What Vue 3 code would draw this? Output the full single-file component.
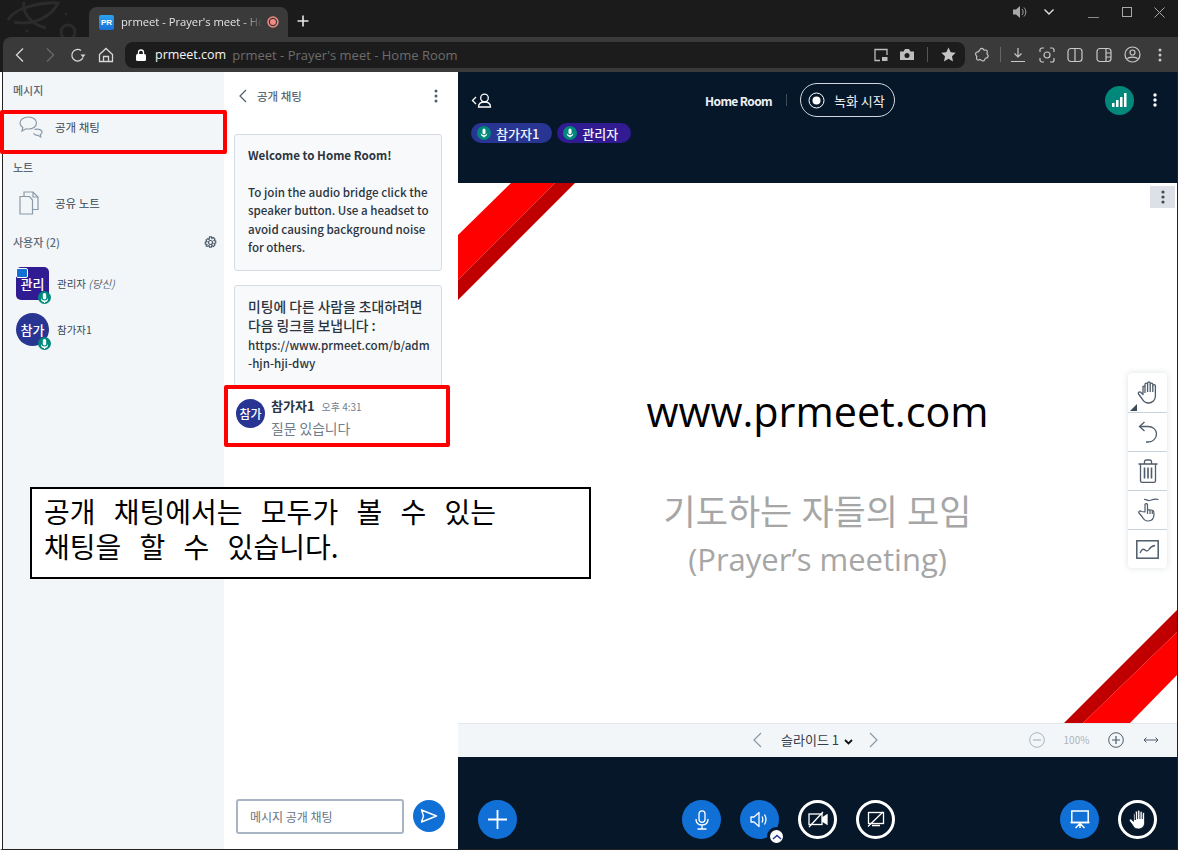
<template>
  <div class="window">
    <!-- browser tab strip -->
    <div class="tabstrip">
      <svg class="swirl" width="84" height="37" viewBox="0 0 84 37" fill="none" stroke="#2b2b2b" stroke-width="3">
        <path d="M8 20C14 8 40 2 58 3C52 16 34 26 14 22" />
        <path d="M24 2C22 12 30 24 46 28" />
        <circle cx="68" cy="32" r="7" />
        <circle cx="66" cy="14" r="1.5" fill="#2b2b2b" stroke="none" />
        <circle cx="27" cy="31" r="1.5" fill="#2b2b2b" stroke="none" />
      </svg>
      <div class="tab">
        <span class="favicon">PR</span>
        <span class="tab-title">prmeet - Prayer's meet - Home Room</span>
        <svg class="tab-rec" width="14" height="14" viewBox="0 0 14 14">
          <circle cx="7" cy="7" r="5" fill="none" stroke="#f28b82" stroke-width="1.5" />
          <circle cx="7" cy="7" r="3" fill="#f28b82" />
        </svg>
      </div>
      <svg class="new-tab" width="14" height="14" viewBox="0 0 14 14" stroke="#e8e8e8" stroke-width="1.6">
        <path d="M7 1.5v11M1.5 7h11" />
      </svg>
      <div class="win-controls">
        <svg width="16" height="14" viewBox="0 0 16 14">
          <path d="M1 4.500h3L8 1v12L4 9.500H1z" fill="#a8a8a8" />
          <path d="M10 4c1.400 1.600 1.400 4.400 0 6M12 2.500c2.400 2.600 2.400 6.400 0 9" fill="none" stroke="#a8a8a8" />
        </svg>
        <svg class="wc-chevron" width="12" height="8" viewBox="0 0 12 8" fill="none" stroke="#e0e0e0" stroke-width="1.400">
          <path d="M1.500 1.500 6 6l4.500-4.500" />
        </svg>
        <svg class="wc-min" width="11" height="11" viewBox="0 0 11 11" stroke="#8a8a8a"><path d="M0 10.500h11" /></svg>
        <svg class="wc-max" width="10" height="10" viewBox="0 0 10 10" fill="none" stroke="#a8a8a8"><rect x=".5" y=".5" width="9" height="9" /></svg>
        <svg class="wc-close" width="11" height="11" viewBox="0 0 11 11" stroke="#a8a8a8"><path d="m.5.5 10 10M10.500.5l-10 10" /></svg>
      </div>
    </div>

    <!-- browser toolbar -->
    <div class="toolbar">
      <div class="nav-icons">
        <svg width="16" height="16" viewBox="0 0 16 16" fill="none" stroke="#d8d8d8" stroke-width="1.300"><path d="M11 1.500 4.500 8l6.500 6.500" /></svg>
        <svg width="16" height="16" viewBox="0 0 16 16" fill="none" stroke="#6a6a6a" stroke-width="1.300"><path d="M5 1.500 11.500 8 5 14.500" /></svg>
        <svg width="16" height="16" viewBox="0 0 16 16" fill="none" stroke="#d8d8d8" stroke-width="1.300"><path d="M13 10.500A5.800 5.800 0 1 1 11 3.500" /><path d="M10.500 7.500h5l-2.500 3z" fill="#d8d8d8" stroke="none" /></svg>
        <svg width="16" height="16" viewBox="0 0 16 16" fill="none" stroke="#d8d8d8" stroke-width="1.300"><path d="M1.500 7.500 8 1.500l6.500 6V14.500h-13zM5.500 14.500V9.500h5v5" /></svg>
      </div>
      <div class="address">
        <svg width="10" height="12" viewBox="0 0 10 12"><rect y="5" width="10" height="7" rx="1.500" fill="#fff" /><path d="M2.500 5.500V3.500a2.500 2.500 0 0 1 5 0v2" fill="none" stroke="#fff" stroke-width="1.300" /></svg>
        <span class="host">prmeet.com</span>
        <span class="page-title">prmeet - Prayer's meet - Home Room</span>
        <div class="address-icons">
          <svg width="14" height="14" viewBox="0 0 14 14" fill="none" stroke="#bdbdbd" stroke-width="1.300"><path d="M6 12.500H1V1.500h12V7" /><rect x="8" y="9" width="5.500" height="4" fill="#bdbdbd" stroke="none" /></svg>
          <svg width="14" height="13" viewBox="0 0 14 13"><path d="M0 3.500h3.500L5 1h4l1.500 2.500H14V12H0z" fill="#bdbdbd" /><circle cx="7" cy="7.500" r="2.500" fill="#1c1c1c" /></svg>
          <span class="addr-sep"></span>
          <svg width="15" height="15" viewBox="0 0 15 15"><path d="m7.500.5 2.200 4.700 5 .6-3.700 3.500 1 5.100-4.500-2.600L3 14.400l1-5.100L.3 5.800l5-.6z" fill="#c4c4c4" /></svg>
        </div>
      </div>
      <div class="ext-icons">
        <svg width="16" height="16" viewBox="0 0 16 16" fill="none" stroke="#c8c8c8" stroke-width="1.200"><path d="M6 2.500c1-1.500 3-1.500 3.500 0 .3 1 1.500.5 2.500.5 1.500 0 1.500 2 1 3-.5.800.5 1.200 1 2 .6 1.500-.5 3-2 3-1 0-1 1-1.500 2-.8 1.500-2.800 1-3.500 0-.5-.8-1.500-.3-2.500 0-1.500.3-2.500-1.500-1.800-2.800.5-1-.2-1.200-.7-2C1 6.500 2 5 3.500 5 5 5 5 3.800 6 2.500z" /></svg>
        <span class="addr-sep ext-sep"></span>
        <svg width="16" height="16" viewBox="0 0 16 16" fill="none" stroke="#c8c8c8" stroke-width="1.200"><path d="M8 1v9M4.500 6.500 8 10l3.500-3.500M1 14.500h14" /></svg>
        <svg width="16" height="16" viewBox="0 0 16 16" fill="none" stroke="#c8c8c8" stroke-width="1.200"><path d="M1 5V3a2 2 0 0 1 2-2h2M11 1h2a2 2 0 0 1 2 2v2M15 11v2a2 2 0 0 1-2 2h-2M5 15H3a2 2 0 0 1-2-2v-2" /><circle cx="8" cy="8" r="3" /></svg>
        <svg width="16" height="16" viewBox="0 0 16 16" fill="none" stroke="#c8c8c8" stroke-width="1.200"><rect x="1" y="1.500" width="14" height="13" rx="3" /><path d="M8 1.500v13" /></svg>
        <svg width="16" height="16" viewBox="0 0 16 16" fill="none" stroke="#c8c8c8" stroke-width="1.200"><rect x="1" y="1.500" width="14" height="13" rx="3" /><path d="M10 1.500v13M10 6h5M10 10h5" /></svg>
        <svg width="17" height="17" viewBox="0 0 17 17" fill="none" stroke="#c8c8c8" stroke-width="1.200"><circle cx="8.500" cy="8.500" r="7.500" /><circle cx="8.500" cy="6.500" r="2.500" /><path d="M3.500 13c1-2.500 9-2.500 10 0" /></svg>
        <svg class="ext-dots" width="4" height="14" viewBox="0 0 4 14" fill="#c8c8c8"><circle cx="2" cy="2" r="1.500" /><circle cx="2" cy="7" r="1.500" /><circle cx="2" cy="12" r="1.500" /></svg>
      </div>
    </div>

    <div class="app">
      <!-- sidebar -->
      <aside class="sidebar">
        <h4 class="side-title">메시지</h4>
        <div class="side-row chat-row">
          <svg width="24" height="22" viewBox="0 0 24 22" fill="none" stroke="#8a99a8" stroke-width="1.200">
            <path d="M9.500 1C4.800 1 1 3.700 1 7c0 1.800 1.100 3.400 2.800 4.500L3 15l4-2.200c.8.200 1.600.2 2.500.2 4.700 0 8-2.700 8-6s-3.300-6-8-6z" />
            <path d="M15.500 13.500c1.500-.2 3-.5 4.500-.2 2 .5 3.200 1.500 3 3-.1 1-.8 1.800-1.700 2.300l.5 2.400-3-1.700c-1.800.2-3.500-.5-4.300-2" />
          </svg>
          <span>공개 채팅</span>
        </div>
        <h4 class="side-title note-title">노트</h4>
        <div class="side-row note-row">
          <svg width="20" height="24" viewBox="0 0 20 24" fill="none" stroke="#8a99a8" stroke-width="1.200">
            <path d="M1 5.500h9.500l3 3.500v14H1z" />
            <path d="M5 5.500V1h9l5 5v12.500h-5.500" />
            <path d="M14 1v5h5" />
          </svg>
          <span>공유 노트</span>
        </div>
        <div class="users-head">
          <h4 class="side-title">사용자 (2)</h4>
          <svg width="13" height="13" viewBox="0 0 13 13" fill="none" stroke="#4e5c6b" stroke-width="1.200">
            <circle cx="6.500" cy="6.500" r="2" />
            <path d="M5.500.8h2l.4 1.700 1.500-.9 1.500 1.500-.9 1.500 1.700.4v2l-1.700.4.9 1.500-1.500 1.500-1.500-.9-.4 1.700h-2l-.4-1.700-1.500.9L2.100 10l.9-1.500-1.700-.4v-2l1.700-.4-.9-1.500 1.500-1.500 1.500.9z" />
          </svg>
        </div>
        <div v-for="u in users" :key="u.short" class="user">
          <div class="avatar" :class="u.cls">
            {{ u.short }}
            <span v-if="u.presenter" class="presenter-badge"></span>
            <span class="mic-badge">
              <svg width="9" height="10" viewBox="0 0 9 10" fill="#fff"><rect x="2.800" y="0" width="3.400" height="6.500" rx="1.700" /><path d="M1 4.500c0 4 7 4 7 0v1c0 3.500-2.500 3.500-3 3.600V10H4V9.100c-.5-.1-3-.1-3-3.600z" /></svg>
            </span>
          </div>
          <span class="user-name">{{ u.name }}<em v-if="u.you"> (당신)</em></span>
        </div>
      </aside>

      <!-- public chat panel -->
      <section class="chat">
        <div class="chat-head">
          <svg width="8" height="14" viewBox="0 0 8 14" fill="none" stroke="#4e5c6b" stroke-width="1.200"><path d="M7 1 1 7l6 6" /></svg>
          <span class="chat-title">공개 채팅</span>
          <svg class="chat-dots" width="4" height="14" viewBox="0 0 4 14" fill="#4e5c6b"><circle cx="2" cy="2" r="1.500" /><circle cx="2" cy="7" r="1.500" /><circle cx="2" cy="12" r="1.500" /></svg>
        </div>
        <div class="chat-list">
          <div class="card">
            <p><span class="strong">Welcome to Home Room!</span></p>
            <p class="blank"></p>
            <p>To join the audio bridge click the speaker button. Use a headset to avoid causing background noise for others.</p>
          </div>
          <div class="card invite">
            <p><span class="ko">미팅에 다른 사람을 초대하려면</span><br /><span class="ko">다음 링크를 보냅니다 :</span><br />https://www.prmeet.com/b/adm<br />-hjn-hji-dwy</p>
          </div>
        </div>
        <div class="composer">
          <div class="composer-input">메시지 공개 채팅</div>
          <button class="send">
            <svg width="18" height="14" viewBox="0 0 18 14" fill="none" stroke="#fff" stroke-width="1.400" stroke-linejoin="round"><path d="M1.500 1 16.500 7 1.500 13 3.500 7z" /></svg>
          </button>
        </div>
      </section>

      <!-- presentation area -->
      <main class="main">
        <header class="main-head">
          <div class="head-top">
            <svg class="users-toggle" width="21" height="15" viewBox="0 0 21 15" fill="none" stroke="#fff" stroke-width="1.300">
              <path d="M5 4 1.500 7.500 5 11" />
              <circle cx="13.500" cy="5" r="3.800" />
              <path d="M7.500 14c0-3.500 2.500-5 6-5s6 1.500 6 5z" />
            </svg>
            <div class="head-center">
              <span class="room">Home Room</span>
              <span class="head-sep"></span>
              <div class="rec-btn">
                <svg width="17" height="17" viewBox="0 0 17 17"><circle cx="8.500" cy="8.500" r="7.500" fill="none" stroke="#fff" /><circle cx="8.500" cy="8.500" r="4" fill="#fff" /></svg>
                <span>녹화 시작</span>
              </div>
            </div>
            <div class="head-right">
              <span class="signal">
                <svg width="15" height="14" viewBox="0 0 15 14" fill="#fff"><rect x="0" y="10" width="2.500" height="4" /><rect x="4" y="7" width="2.500" height="7" /><rect x="8" y="4" width="2.500" height="10" /><rect x="12" y="0" width="2.500" height="14" /></svg>
              </span>
              <svg width="4" height="14" viewBox="0 0 4 14" fill="#fff"><circle cx="2" cy="2" r="1.700" /><circle cx="2" cy="7" r="1.700" /><circle cx="2" cy="12" r="1.700" /></svg>
            </div>
          </div>
          <div class="pills">
            <span v-for="p in pills" :key="p.name" class="pill" :class="p.cls">
              <span class="pill-mic">
                <svg width="8" height="10" viewBox="0 0 9 10" fill="#fff"><rect x="2.800" y="0" width="3.400" height="6.500" rx="1.700" /><path d="M1 4.500c0 4 7 4 7 0v1c0 3.500-2.500 3.500-3 3.600V10H4V9.100c-.5-.1-3-.1-3-3.600z" /></svg>
              </span>
              {{ p.name }}
            </span>
          </div>
        </header>

        <div class="slide">
          <svg class="ribbons" width="719" height="540" viewBox="0 0 719 540">
            <polygon points="53,0 97,0 0,97 0,52" fill="#ff0000" />
            <polygon points="97,0 117,0 0,117 0,97" fill="#c00000" />
            <polygon points="606,540 625,540 719,449 719,427" fill="#c00000" />
            <polygon points="625,540 672,540 719,492 719,449" fill="#ff0000" />
          </svg>
          <p class="slide-url">www.prmeet.com</p>
          <p class="slide-sub">기도하는 자들의 모임</p>
          <p class="slide-sub2">(Prayer’s meeting)</p>
          <button class="slide-menu">
            <svg width="4" height="14" viewBox="0 0 4 14" fill="#3d4a57"><circle cx="2" cy="2" r="1.600" /><circle cx="2" cy="7" r="1.600" /><circle cx="2" cy="12" r="1.600" /></svg>
          </button>
          <div class="wb-tools">
            <div class="wb-item first">
              <svg width="21" height="23" viewBox="0 0 21 23" fill="none" stroke="#4e5c6b" stroke-width="1.300" stroke-linejoin="round">
                <path d="M8 12V3.500a1.300 1.300 0 0 1 2.600 0V2.300a1.300 1.300 0 0 1 2.600 0V3.500a1.300 1.300 0 0 1 2.600 0v1.500a1.300 1.300 0 0 1 2.600 0V15c0 4-3 7-7 7s-5-2-6.500-4.500L1.500 13c-.8-1.500 1.200-3 2.500-1.500L6 13.500V5.500a1.300 1.300 0 0 1 2 0" />
                <path d="M10.600 3.500V11M13.200 3.500V11M15.800 5v6" />
              </svg>
              <span class="wb-corner"></span>
            </div>
            <div class="wb-item">
              <svg width="20" height="22" viewBox="0 0 20 22" fill="none" stroke="#4e5c6b" stroke-width="1.300"><path d="M6.500 1 1.500 5.500l5 4.500" /><path d="M1.500 5.500H10c5 0 8.500 3.200 8.500 7.500S15 21 10 21H8" /></svg>
            </div>
            <div class="wb-item">
              <svg width="20" height="24" viewBox="0 0 20 24" fill="none" stroke="#4e5c6b" stroke-width="1.300"><path d="M.5 5h19M6.500 5V2.500c0-1 1-1.500 2-1.500h3c1 0 2 .5 2 1.500V5M2.500 5v17c0 .8.700 1.300 1.500 1.300h12c.8 0 1.500-.5 1.500-1.300V5" /><path d="M6.500 8.500v11M10 8.500v11M13.500 8.500v11" stroke-width="1.600" /></svg>
            </div>
            <div class="wb-item">
              <svg width="22" height="24" viewBox="0 0 22 24" fill="none" stroke="#4e5c6b" stroke-width="1.200" stroke-linejoin="round">
                <path d="M7 1.500C9 .5 10 3 12.500 2.500 15 2 17 .5 21.500 1.500" />
                <path d="M8 14V6.500a1.300 1.300 0 0 1 2.500 0V12l1-.2 2.500.2 2 .5c1 .5 1 1.500 1 3.500 0 4-2 7-6 7-3 0-4.500-1.500-6-4.500L2 15c-.8-1.500 1-2.800 2.300-1.500z" />
                <path d="M10.500 12v4M13 12v4M15.300 12.500V16" />
              </svg>
            </div>
            <div class="wb-item">
              <svg width="23" height="19" viewBox="0 0 23 19" fill="none" stroke="#4e5c6b" stroke-width="1.300"><rect x=".8" y=".8" width="21.400" height="17.400" stroke-width="1.500" /><path d="M4 13c2-4 3.500-4.500 5-3 1.500 1.500 3 1 4-.5 1-2 3-3.500 6-4" /></svg>
            </div>
          </div>
        </div>

        <div class="slide-bar">
          <div class="slide-nav">
            <svg class="nav-prev" width="9" height="16" viewBox="0 0 9 16" fill="none" stroke="#8a99a8" stroke-width="1.200"><path d="M8 1 1 8l7 7" /></svg>
            <span class="slide-select">슬라이드 1
              <svg class="select-caret" width="9" height="6" viewBox="0 0 9 6" fill="none" stroke="#111" stroke-width="1.800"><path d="m1 1 3.500 3.500L8 1" /></svg>
            </span>
            <svg width="9" height="16" viewBox="0 0 9 16" fill="none" stroke="#8a99a8" stroke-width="1.200"><path d="m1 1 7 7-7 7" /></svg>
          </div>
          <div class="zoom-tools">
            <svg width="16" height="16" viewBox="0 0 16 16" fill="none" stroke="#a9b4bf" stroke-width="1"><circle cx="8" cy="8" r="7.300" /><path d="M4 8h8" stroke-width="1.200" /></svg>
            <span class="zoom-val">100%</span>
            <svg width="16" height="16" viewBox="0 0 16 16" fill="none" stroke="#4e5c6b" stroke-width="1"><circle cx="8" cy="8" r="7.300" /><path d="M4 8h8M8 4v8" stroke-width="1.200" /></svg>
            <svg class="fit" width="16" height="8" viewBox="0 0 16 8" fill="none" stroke="#4e5c6b" stroke-width="1"><path d="M1 4h14M3.500 1.500 1 4l2.500 2.500M12.500 1.500 15 4l-2.500 2.500" /></svg>
          </div>
        </div>

        <footer class="actions">
          <button class="round solid">
            <svg width="19" height="19" viewBox="0 0 19 19" stroke="#fff" stroke-width="1.800"><path d="M9.500 0v19M0 9.500h19" /></svg>
          </button>
          <div class="action-group">
            <button class="round solid">
              <svg width="14" height="20" viewBox="0 0 14 20" fill="none" stroke="#fff" stroke-width="1.300"><rect x="4" y=".8" width="6" height="11.500" rx="3" /><path d="M1 9c0 4 2.500 6 6 6s6-2 6-6M7 15v3.500M2.500 19h9" /></svg>
            </button>
            <button class="round solid has-badge">
              <svg width="19" height="17" viewBox="0 0 19 17" fill="none" stroke="#fff" stroke-width="1.300" stroke-linejoin="round"><path d="M1 6h3l5-4.500v14L4 11H1zM12 5.500c1 1.800 1 4.200 0 6M14.500 3.500c1.800 3 1.800 7 0 10" /></svg>
              <span class="speaker-badge">
                <svg width="10" height="6" viewBox="0 0 10 6" fill="none" stroke="#283593" stroke-width="1.500"><path d="m1 5 4-3.500L9 5" /></svg>
              </span>
            </button>
            <button class="round ring">
              <svg width="20" height="17" viewBox="0 0 20 17" fill="none" stroke="#fff" stroke-width="1.300"><rect x="1" y="3" width="13" height="10.500" /><path d="m14 7 5-3v9l-5-3" fill="#fff" /><path d="M1 16 15 1" /></svg>
            </button>
            <button class="round ring">
              <svg width="18" height="17" viewBox="0 0 18 17" fill="none" stroke="#fff" stroke-width="1.300"><rect x="1.500" y="1.500" width="15" height="11" /><path d="M1 15.500 16 1M5 14.500h8" /></svg>
            </button>
          </div>
          <div class="action-group">
            <button class="round solid">
              <svg width="20" height="19" viewBox="0 0 20 19" fill="none" stroke="#fff" stroke-width="1.500"><rect x="1.800" y="1" width="16.400" height="11.500" /><path d="M.5 12.500h19M10 12.500V18M10 13.500 5.500 18M10 13.500l4.500 4.500" /></svg>
            </button>
            <button class="round ring">
              <svg width="19" height="21" viewBox="0 0 21 23" fill="#fff" stroke="#06172a" stroke-width="1" stroke-linejoin="round">
                <path d="M8 12V3.500a1.300 1.300 0 0 1 2.600 0V2.300a1.300 1.300 0 0 1 2.600 0V3.500a1.300 1.300 0 0 1 2.600 0v1.500a1.300 1.300 0 0 1 2.600 0V15c0 4-3 7-7 7s-5-2-6.500-4.500L1.500 13c-.8-1.500 1.200-3 2.500-1.500L6 13.500V5.500a1.300 1.300 0 0 1 2 0" />
                <path d="M8 5v7M10.600 3.500V11M13.200 3.500V11M15.800 5v6" fill="none" />
              </svg>
            </button>
          </div>
        </footer>
      </main>

      <!-- tutorial annotations laid over the app -->
      <div class="mark mark-chat"></div>
      <div class="mark mark-msg">
        <div class="msg-avatar">참가</div>
        <div class="msg-body">
          <div class="msg-top"><span class="msg-name">참가자1</span><span class="msg-time">오후 4:31</span></div>
          <div class="msg-text">질문 있습니다</div>
        </div>
      </div>
      <div class="callout">공개 채팅에서는 모두가 볼 수 있는<br />채팅을 할 수 있습니다.</div>
    </div>
  </div>
</template>

<script setup>
const users = [
  { short: '관리', name: '관리자', cls: 'admin', presenter: true, you: true },
  { short: '참가', name: '참가자1', cls: 'guest', presenter: false, you: false },
];

const pills = [
  { name: '참가자1', cls: 'guest' },
  { name: '관리자', cls: 'admin' },
];
</script>

<style>
body {
  margin: 0;
  background: #fff;
}
</style>

<style scoped>
.window {
  width: 1178px;
  height: 850px;
  display: flex;
  flex-direction: column;
  background: #1b1b1b;
  overflow: hidden;
  font-family: "Noto Sans CJK KR", "Noto Sans", sans-serif;
}

.tabstrip {
  position: relative;
  height: 37px;
  flex-shrink: 0;
  display: flex;
  align-items: flex-end;
  padding-left: 89px;
  box-sizing: border-box;
}

.swirl {
  position: absolute;
  left: 0;
  top: 0;
}

.tab {
  width: 199px;
  height: 30px;
  box-sizing: border-box;
  padding: 0 8px 0 10px;
  background: #3a3a3a;
  border-radius: 8px 8px 0 0;
  display: flex;
  align-items: center;
  position: relative;
}

.favicon {
  width: 15px;
  height: 15px;
  border-radius: 2px;
  background: linear-gradient(#2aa3ee, #1a6fd8);
  color: #fff;
  font: 700 8px/15px "Liberation Sans", sans-serif;
  text-align: center;
  flex-shrink: 0;
}

.tab-title {
  margin-left: 7px;
  width: 143px;
  font: 11.2px/16px "Open Sans", sans-serif;
  color: #e4e4e4;
  white-space: nowrap;
  overflow: hidden;
  -webkit-mask-image: linear-gradient(to right, #000 85%, transparent);
  mask-image: linear-gradient(to right, #000 85%, transparent);
}

.tab-rec {
  margin-left: 3px;
}

.new-tab {
  margin: 0 0 9px 8px;
}

.win-controls {
  position: absolute;
  top: 5px;
  right: 0;
  height: 14px;
  display: flex;
  align-items: center;
}

.wc-chevron {
  margin-left: 15px;
}

.wc-min {
  margin-left: 33px;
}

.wc-max {
  margin-left: 23px;
}

.wc-close {
  margin: 0 13px 0 22px;
}

.toolbar {
  height: 35px;
  margin-left: 3px;
  flex-shrink: 0;
  box-sizing: border-box;
  background: #3a3a3a;
  border-radius: 8px 0 0 0;
  display: flex;
  align-items: center;
  padding: 0 16px 0 9px;
}

.nav-icons {
  display: flex;
  gap: 12px;
  width: 113px;
  flex-shrink: 0;
}

.nav-icons svg:first-child {
  margin-right: 2px;
}

.address {
  width: 840px;
  height: 26px;
  box-sizing: border-box;
  background: #1c1c1c;
  border-radius: 8px;
  display: flex;
  align-items: center;
  padding: 0 9px 0 11px;
  flex-shrink: 0;
}

.host {
  margin-left: 9px;
  font: 12.5px/18px "Open Sans", sans-serif;
  color: #f4f4f4;
}

.page-title {
  margin-left: 6px;
  font: 13px/18px "Open Sans", sans-serif;
  color: #6c6c6c;
}

.address-icons {
  margin-left: auto;
  display: flex;
  align-items: center;
  gap: 12px;
}

.addr-sep {
  width: 1px;
  height: 15px;
  background: #555;
  margin: 0 1px;
}

.ext-icons {
  margin-left: 9px;
  display: flex;
  align-items: center;
  gap: 12.5px;
}

.ext-sep {
  background: #666;
  margin: 0 -3px;
}

.ext-dots {
  margin-left: 4px;
}

.app {
  position: relative;
  flex: 1;
  min-height: 0;
  display: flex;
  border-left: 2px solid #fff;
  border-right: 1px solid #222;
  border-bottom: 1px solid #222;
}

.sidebar {
  width: 222px;
  flex-shrink: 0;
  border-left: 1px solid #222;
  background: #f3f6f9;
  padding: 9px 0 0 10px;
  box-sizing: border-box;
  color: #3b4754;
}

.side-title {
  margin: 0;
  font-size: 11px;
  line-height: 18px;
  font-weight: 500;
  color: #5b6875;
}

.side-row {
  display: flex;
  align-items: center;
  gap: 12px;
  font-size: 11.5px;
  color: #3b4754;
  padding-left: 6px;
}

.chat-row {
  margin-top: 17px;
  height: 22px;
}

.note-title {
  margin-top: 20px;
}

.note-row {
  margin-top: 15px;
  height: 24px;
  gap: 16px;
}

.users-head {
  margin-top: 18px;
  padding-right: 7px;
  display: flex;
  align-items: center;
  justify-content: space-between;
}

.user {
  display: flex;
  align-items: center;
  gap: 8px;
  height: 33px;
  margin: 13px 0 0 3px;
}

.users-head + .user {
  margin-top: 16px;
}

.avatar {
  position: relative;
  width: 33px;
  height: 33px;
  color: #fff;
  font-size: 13px;
  font-weight: 500;
  line-height: 33px;
  text-align: center;
  flex-shrink: 0;
}

.avatar.admin {
  background: #311b92;
  border-radius: 5px;
}

.avatar.guest {
  background: #283593;
  border-radius: 50%;
}

.presenter-badge {
  position: absolute;
  left: 0;
  top: 1px;
  width: 10px;
  height: 8px;
  background: #1170d6;
  border: 1px solid #fff;
  border-radius: 2px;
}

.mic-badge {
  position: absolute;
  right: -2px;
  bottom: -4px;
  width: 13px;
  height: 13px;
  border-radius: 50%;
  background: #00897b;
  display: flex;
  align-items: center;
  justify-content: center;
}

.user-name {
  font-size: 10.5px;
  color: #3b4754;
}

.user-name em {
  font-style: italic;
  color: #5b6875;
}

.chat {
  width: 234px;
  flex-shrink: 0;
  background: #fff;
  display: flex;
  flex-direction: column;
}

.chat-head {
  height: 48px;
  flex-shrink: 0;
  display: flex;
  align-items: center;
  padding: 0 20px 0 15px;
}

.chat-title {
  margin-left: 10px;
  font-size: 11.5px;
  font-weight: 500;
  color: #5b6875;
}

.chat-dots {
  margin-left: auto;
}

.chat-list {
  flex: 1;
  min-height: 0;
  overflow: hidden;
  padding: 14px 16px 0 10px;
  display: flex;
  flex-direction: column;
  gap: 14px;
}

.card {
  background: #f8f9fb;
  border: 1px solid #d5dce3;
  border-radius: 3px;
  padding: 11px 10px 13.6px 13px;
  font-size: 11.6px;
  font-weight: 500;
  line-height: 18.4px;
  color: #2b3540;
}

.card p {
  margin: 0;
}

.card .blank {
  height: 18.4px;
}

.ko {
  font-size: 13.8px;
}

.strong {
  font-weight: 700;
}

.invite {
  height: 130px;
  flex-shrink: 0;
  box-sizing: border-box;
}

.composer {
  height: 50px;
  flex-shrink: 0;
  display: flex;
  gap: 9px;
  padding: 0 13px 0 12px;
}

.composer-input {
  width: 169px;
  height: 35px;
  box-sizing: border-box;
  border: 2px solid #a8b5c4;
  border-radius: 3px;
  padding-left: 12px;
  font-size: 12px;
  line-height: 31px;
  color: #66727f;
}

.send {
  width: 32px;
  height: 32px;
  margin-top: 1px;
  padding: 0;
  border: 0;
  border-radius: 50%;
  background: #1170d6;
  display: flex;
  align-items: center;
  justify-content: center;
}

.main {
  flex: 1;
  min-width: 0;
  display: flex;
  flex-direction: column;
  background: #06172a;
}

.main-head {
  height: 111px;
  flex-shrink: 0;
  box-sizing: border-box;
  padding: 11px 20px 0 13px;
}

.head-top {
  position: relative;
  height: 34px;
  display: flex;
  align-items: center;
  justify-content: space-between;
}

.head-center {
  position: absolute;
  left: 234px;
  top: 0;
  height: 34px;
  display: flex;
  align-items: center;
}

.room {
  width: 81px;
  font-size: 12px;
  font-weight: 700;
  color: #eef1f5;
  letter-spacing: -0.6px;
  white-space: nowrap;
}

.head-sep {
  width: 1px;
  height: 12px;
  background: #3d4a57;
}

.rec-btn {
  margin-left: 13px;
  width: 95px;
  height: 34px;
  box-sizing: border-box;
  border: 1px solid #d3d8de;
  border-radius: 17px;
  padding-left: 7px;
  display: flex;
  align-items: center;
  gap: 9px;
  font-size: 13px;
  color: #f0f2f5;
  white-space: nowrap;
}

.head-right {
  display: flex;
  align-items: center;
  gap: 19px;
}

.signal {
  width: 29px;
  height: 29px;
  border-radius: 50%;
  background: #00897b;
  display: flex;
  align-items: center;
  justify-content: center;
}

.pills {
  margin-top: 6px;
  display: flex;
  gap: 5px;
}

.pill {
  height: 20px;
  border-radius: 10px;
  padding: 0 13px 0 6px;
  display: flex;
  align-items: center;
  gap: 5px;
  font-size: 13px;
  font-weight: 500;
  color: #f0f2f5;
}

.pill.guest {
  background: #283593;
}

.pill.admin {
  background: #311b92;
}

.pill-mic {
  width: 14px;
  height: 14px;
  border-radius: 50%;
  background: #00897b;
  display: flex;
  align-items: center;
  justify-content: center;
}

.slide {
  position: relative;
  height: 540px;
  flex-shrink: 0;
  background: #fff;
  display: flex;
  flex-direction: column;
  align-items: center;
  padding-top: 200px;
  box-sizing: border-box;
  overflow: hidden;
}

.ribbons {
  position: absolute;
  left: 0;
  top: 0;
}

.slide p {
  position: relative;
  margin: 0;
  font-family: "Open Sans", "Noto Sans CJK KR", sans-serif;
  white-space: nowrap;
}

.slide-url {
  font-size: 41.3px;
  line-height: 56px;
  color: #000;
}

.slide .slide-sub {
  margin-top: 51px;
  font-size: 35px;
  line-height: 44px;
  color: #a6a6a6;
}

.slide .slide-sub2 {
  margin-top: 5px;
  font-size: 31px;
  line-height: 40px;
  color: #a6a6a6;
}

.slide-menu {
  position: absolute;
  right: 2px;
  top: 3px;
  width: 25px;
  height: 22px;
  padding: 0;
  border: 0;
  background: #dde1e7;
  display: flex;
  align-items: center;
  justify-content: center;
}

.wb-tools {
  position: absolute;
  left: 670px;
  top: 190px;
  width: 39px;
  background: #fff;
  border-radius: 4px;
  box-shadow: 0 0 6px rgba(40, 60, 80, 0.16);
}

.wb-item {
  position: relative;
  height: 39px;
  box-sizing: border-box;
  display: flex;
  align-items: center;
  justify-content: center;
  border-top: 1px solid #c8d2dc;
}

.wb-item.first {
  border-top: 0;
}

.wb-corner {
  position: absolute;
  left: 2px;
  bottom: 1px;
  border-style: solid;
  border-width: 0 0 7px 7px;
  border-color: transparent transparent #3d4a57 transparent;
}

.slide-bar {
  height: 34px;
  flex-shrink: 0;
  background: #f3f6f9;
  border-top: 1px solid #e4e8ec;
  box-sizing: border-box;
  position: relative;
}

.slide-nav {
  position: absolute;
  left: 295px;
  top: 0;
  height: 31px;
  display: flex;
  align-items: center;
  gap: 14px;
}

.nav-prev {
  margin-right: 5px;
}

.slide-select {
  width: 74px;
  font-size: 13px;
  color: #333d47;
  white-space: nowrap;
}

.select-caret {
  margin-left: 2px;
}

.zoom-tools {
  position: absolute;
  left: 571px;
  top: 0;
  height: 31px;
  display: flex;
  align-items: center;
}

.zoom-val {
  width: 63px;
  text-align: center;
  font-size: 10px;
  color: #a9b4bf;
}

.fit {
  margin-left: 19px;
}

.actions {
  flex: 1;
  min-height: 0;
  display: flex;
  justify-content: space-between;
  padding: 43px 20px 0;
}

.action-group {
  display: flex;
  gap: 19px;
}

.round {
  position: relative;
  width: 39px;
  height: 39px;
  box-sizing: border-box;
  padding: 0;
  border-radius: 50%;
  display: flex;
  align-items: center;
  justify-content: center;
  background: transparent;
  border: 3px solid #fff;
}

.round.solid {
  background: #1170d6;
  border: 0;
}

.speaker-badge {
  position: absolute;
  right: -7px;
  bottom: -7px;
  background: #fff;
  border-radius: 50%;
  border: 3px solid #06172a;
  box-sizing: content-box;
  width: 13px;
  height: 13px;
  display: flex;
  align-items: center;
  justify-content: center;
}

.mark {
  position: absolute;
  box-sizing: border-box;
  border: 4px solid #ff0000;
  border-radius: 2px;
}

.mark-chat {
  left: -2px;
  top: 38px;
  width: 227px;
  height: 44px;
}

.mark-msg {
  left: 222px;
  top: 313px;
  width: 226px;
  height: 62px;
  background: #fff;
  display: flex;
  padding: 10px 0 0 8px;
  gap: 6px;
}

.msg-avatar {
  width: 29px;
  height: 29px;
  border-radius: 50%;
  background: #283593;
  color: #fff;
  font-size: 12px;
  font-weight: 500;
  line-height: 29px;
  text-align: center;
  flex-shrink: 0;
}

.msg-top {
  display: flex;
  align-items: baseline;
  gap: 7px;
  margin-top: -2px;
  line-height: 18px;
}

.msg-name {
  font-size: 13px;
  font-weight: 700;
  color: #2b3540;
}

.msg-time {
  font-size: 10px;
  color: #6f7c89;
}

.msg-text {
  margin-top: 4px;
  font-size: 13.8px;
  line-height: 17px;
  color: #6f7c89;
}

.callout {
  position: absolute;
  left: 28px;
  top: 415px;
  width: 561px;
  height: 92px;
  box-sizing: border-box;
  background: #fff;
  border: 2px solid #000;
  padding: 5px 12px;
  font-family: "Noto Sans CJK KR", sans-serif;
  font-size: 28px;
  line-height: 35px;
  word-spacing: 12px;
  color: #000;
}
</style>
